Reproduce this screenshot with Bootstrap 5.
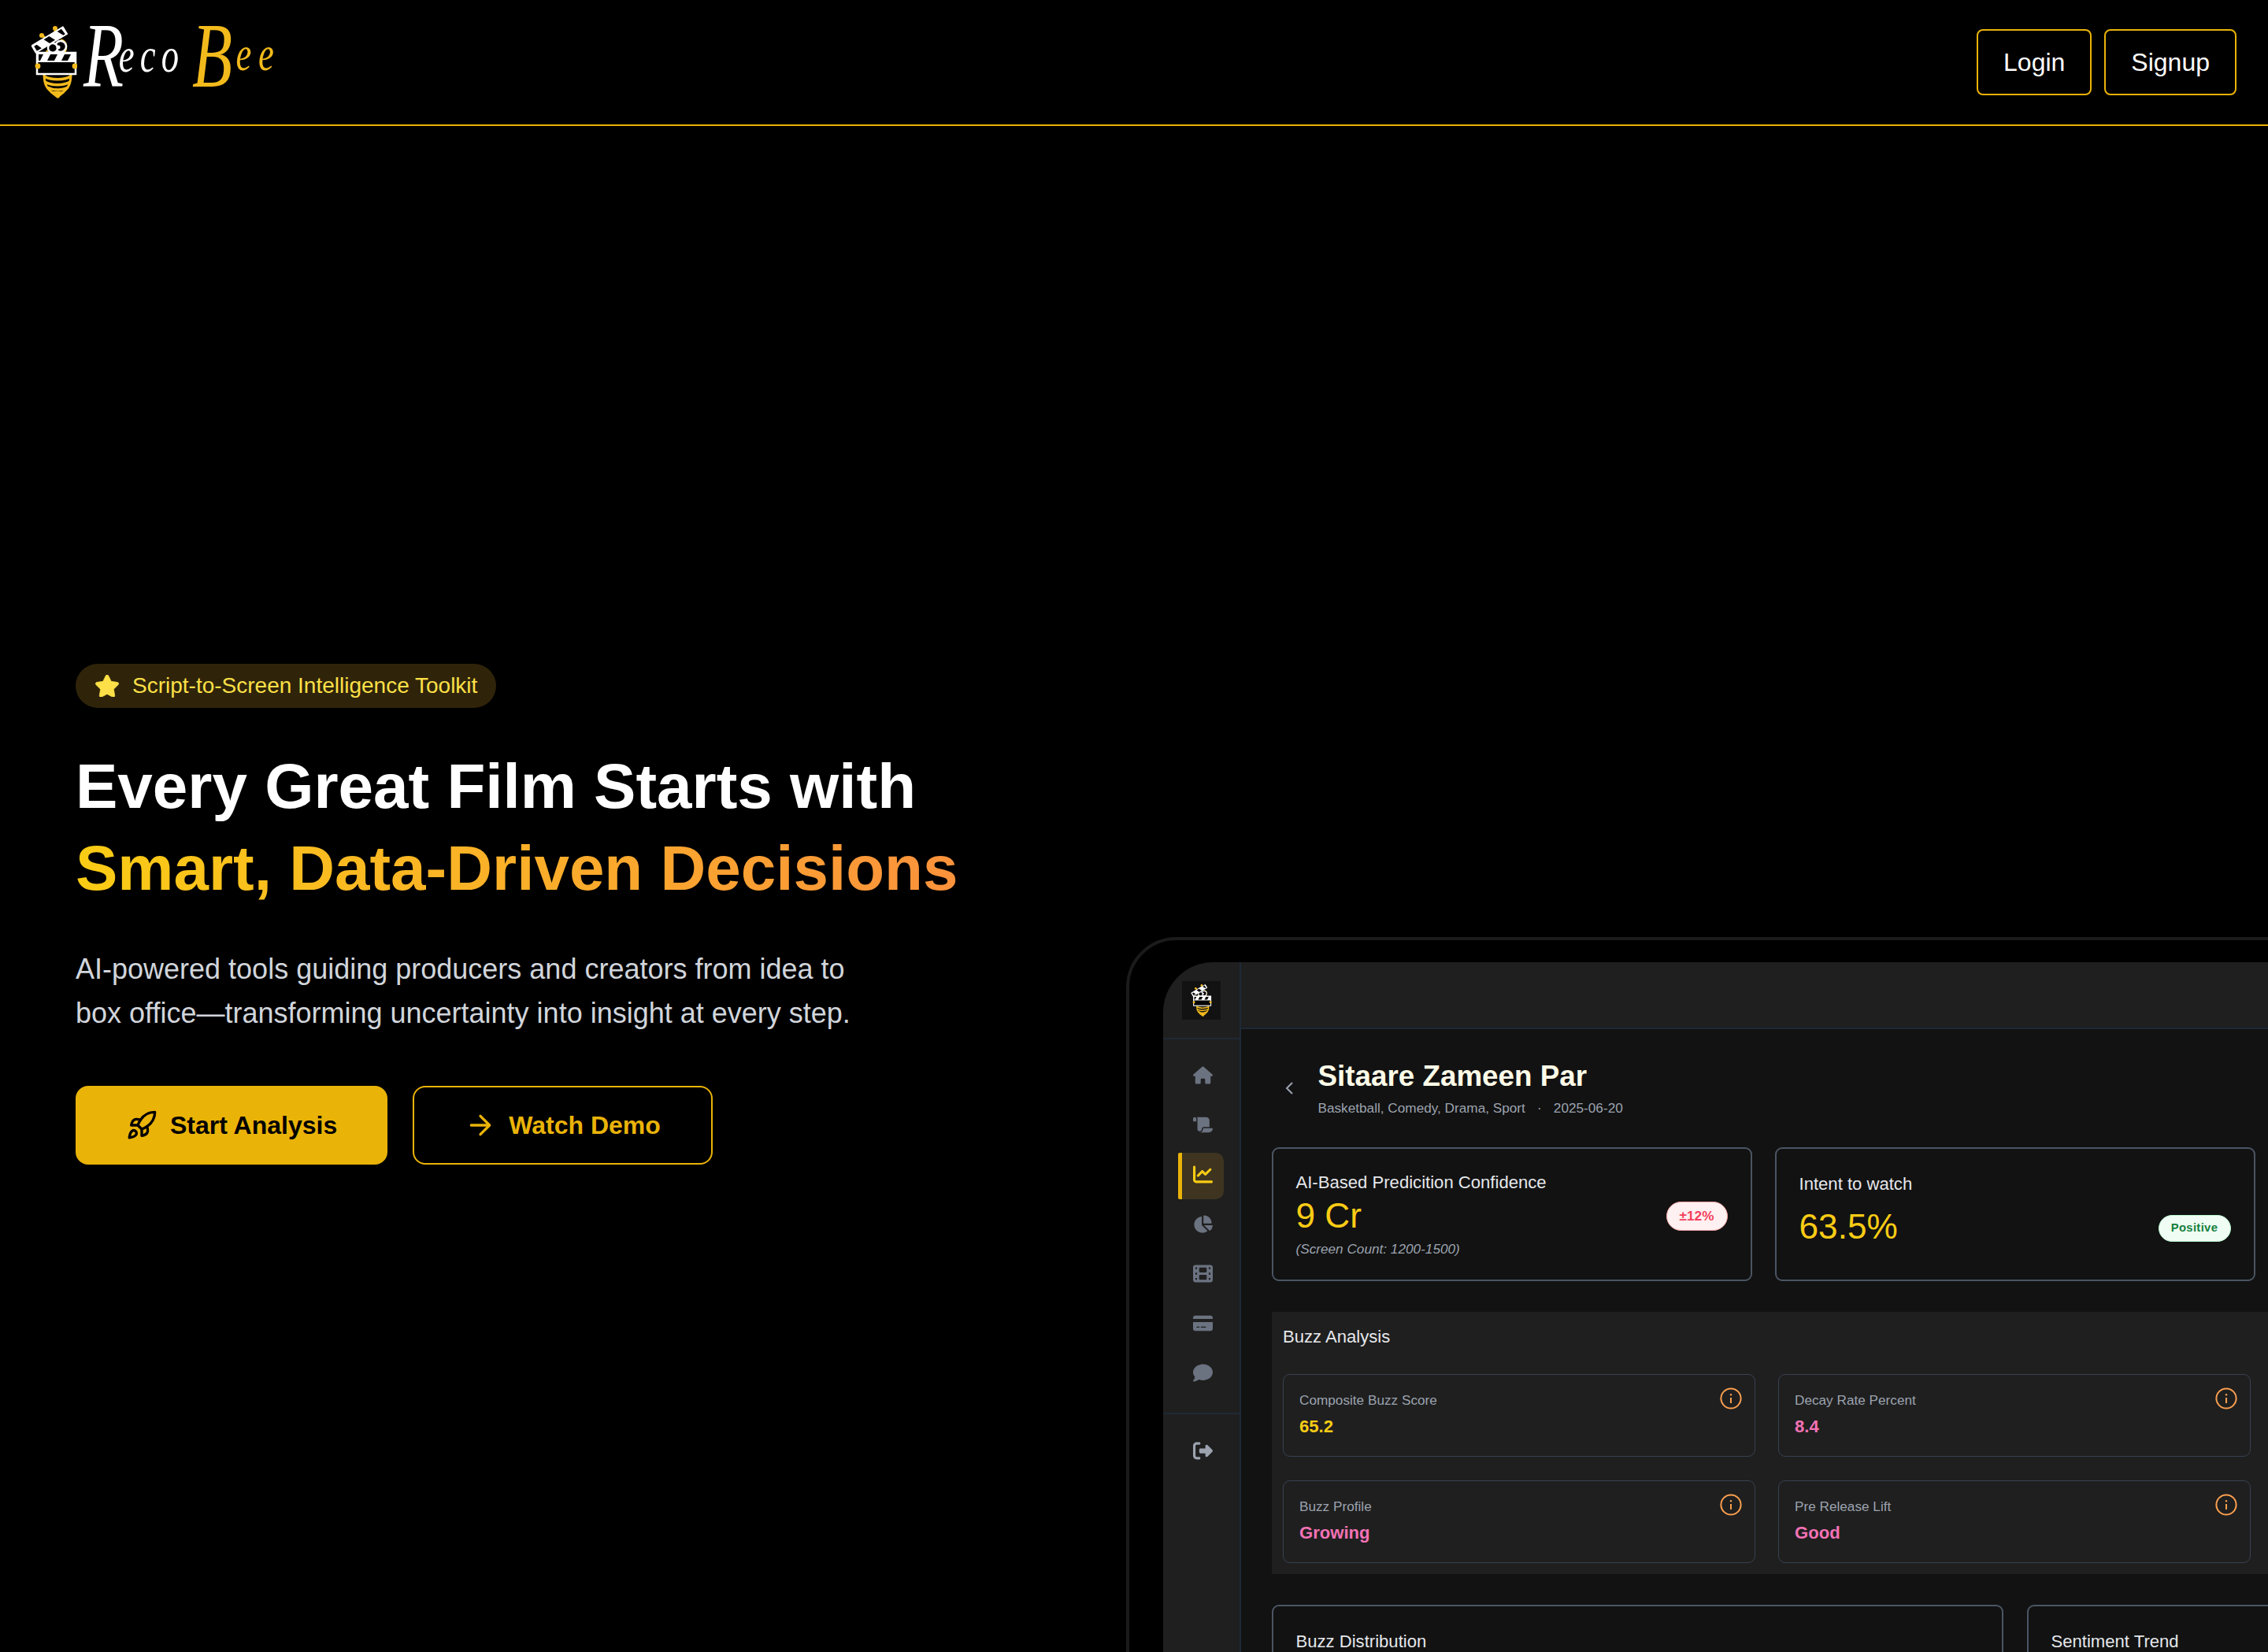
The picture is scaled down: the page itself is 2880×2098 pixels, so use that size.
<!DOCTYPE html>
<html lang="en">
<head>
<meta charset="utf-8">
<meta name="viewport" content="width=device-width, initial-scale=1">
<title>RecoBee</title>
<link href="https://cdn.jsdelivr.net/npm/bootstrap@5.3.0/dist/css/bootstrap.min.css" rel="stylesheet">
<style>
  body { background:#000; color:#fff; font-family:"Liberation Sans", Arial, sans-serif; height:2098px; overflow:hidden; }
  svg { display:block; flex:none; }
  .topbar { height:160px; padding:0 40px; border-bottom:2px solid #eab308; }
  .topbar .btn { font-size:32px; line-height:48px; padding:16px 32px; border:2px solid #eab308; border-radius:8px; color:#fff; }
  .hero { height:1938px; overflow:hidden; }
  .pitch { width:1430px; padding:683px 0 0 96px; flex:none; }
  .tagline { height:56px; padding:8px 24px; gap:16px; border-radius:28px; background:#2f240a; color:#fde047; font-size:28px; line-height:40px; }
  .headline { font-size:80px; line-height:104px; font-weight:700; margin:48px 0 0; white-space:nowrap; }
  .headline .grad { background:linear-gradient(90deg,#facc15,#fb923c); -webkit-background-clip:text; background-clip:text; color:transparent; }
  .intro { font-size:36px; line-height:56px; margin:48px 0 0; color:#d1d5db; white-space:nowrap; }
  .cta { margin-top:64px; gap:32px; }
  .cta .btn { height:100px; padding:0 62px; gap:16px; border:2px solid #eab308; border-radius:16px; font-size:32px; font-weight:700; }
  .cta .solid { background:#eab308; color:#000; }
  .cta .ghost { color:#eab308; padding:0 64px; }
  .device { flex:none; width:1700px; height:1200px; margin-top:1030px; border:4px solid #1b1b1b; border-radius:64px; padding:27.7px 43px; background:#000; }
  .screen { height:1150px; border-radius:64px 0 0 0; overflow:hidden; background:#121212; }
  .side { width:99px; flex:none; background:#1f1f1f; border-right:2px solid #1f2937; }
  .side-logo { height:98px; border-bottom:2px solid #1f2937; padding:24px 0 0 24px; }
  .side-logo div { width:49px; height:49px; background:#121212; }
  .side-nav { padding:19px 0 0 19px; gap:4.4px; }
  .side-item { width:58px; height:58.5px; padding-bottom:4px; border-left:5.5px solid transparent; border-radius:2px 10px 10px 2px; color:#6b7280; }
  .side-item svg { width:25px; height:25px; }
  .side-item.on { background:#3e3420; border-left-color:#eab308; color:#facc15; }
  .side-exit { margin-top:19px; border-top:2px solid #1f2937; padding:20px 0 0 19px; }
  .side-exit .side-item { color:#9ca3af; }
  .mainpane { width:1500px; flex:none; }
  .mainbar { height:85px; background:#1f1f1f; border-bottom:2px solid #1f2937; }
  .board { padding:38px 0 0 38.5px; }
  .film-title { font-size:36.8px; line-height:44px; font-weight:700; color:#fefce8; margin:0; }
  .film-meta { font-size:17.2px; line-height:24px; margin-top:6px; color:#9ca3af; }
  .tile { border:2px solid #4b5563; border-radius:9px; flex:none; }
  .stats { margin-top:38.3px; gap:29px; }
  .stats .tile { width:610px; height:170px; padding:28px 29px 0; }
  .t-head { font-size:22.1px; line-height:30px; color:#e5e7eb; }
  .t-num { font-size:44.2px; line-height:48px; color:#facc15; margin-top:3px; }
  .t-note { font-size:17.2px; line-height:24px; color:#9ca3af; margin-top:6px; font-style:italic; }
  .intent .t-head { padding-top:2.5px; }
  .intent .t-num { margin-top:15px; }
  .chip { border-radius:20px; font-weight:700; text-align:center; }
  .chip-red { width:78px; height:37px; line-height:35px; margin-top:39px; font-size:17.2px; background:#fff0f1; color:#f43f5e; border:1px solid #fca5a5; }
  .chip-green { width:92px; height:34px; line-height:31px; margin-top:56px; font-size:14.8px; letter-spacing:.35px; background:#f0fdf4; color:#15803d; border:1px solid #bbf7d0; }
  .buzz { margin-top:38.8px; height:333.7px; padding:17px 0 0 14.5px; background:#1f1f1f; }
  .buzz-grid { margin-top:32px; display:grid; grid-template-columns:600px 600px; grid-auto-rows:105px; gap:30px 29px; }
  .metric { border:1px solid #374151; border-radius:9px; padding:20px 16px 0 20px; }
  .m-label { font-size:17.2px; line-height:24px; color:#9ca3af; }
  .m-val { font-size:22.1px; line-height:30px; font-weight:700; margin-top:7px; color:#f472b6; }
  .m-val.gold { color:#facc15; }
  .metric svg { margin-top:-4px; }
  .charts { margin-top:39px; gap:30px; }
  .charts .tile { height:400px; padding:30px 29px; }
</style>
</head>
<body>
<svg width="0" height="0" class="position-absolute">
  <defs>
    <symbol id="bee" viewBox="0 0 58 94">
      <g fill="none" stroke="#f3ba1c" stroke-width="3">
        <path d="M13 13l6 6M30 6v10"/><path d="M37 20c7 1 9 9 4 17M20 33v4"/>
        <path d="M16 63c0 14 3 19 17 29c13-10 17-14 17-29"/>
        <path d="M16 66c8 5 26 5 34 0M17 73c8 5 24 5 32 0M20 80c8 4 19 4 26 0M25 86c5 2 11 2 16 0" stroke-width="3.5"/>
      </g>
      <g fill="#f3ba1c"><circle cx="13" cy="14" r="3"/><circle cx="30" cy="5" r="3"/><path d="M27 85h10l-2 9z"/></g>
      <circle cx="37" cy="28" r="7" fill="#000" stroke="#fff" stroke-width="2.5"/><circle cx="27" cy="30" r="6" fill="#000" stroke="#fff" stroke-width="2.5"/>
      <circle cx="34" cy="29" r="2.5" fill="#fff"/>
      <g transform="rotate(-31 7 36)"><rect x="5" y="24" width="48" height="12" rx="1" fill="#fff"/><path d="M8 27h4l3 7H8zM23 26h8l4 8h-8zM43 26h6l1 8h-3z" fill="#000"/></g>
      <rect x="7" y="36" width="49" height="27" fill="#000" stroke="#fff" stroke-width="2.5"/>
      <path d="M7 36h49v12H7z" fill="#fff"/>
      <path d="M9 38h6l-4 8H9zM24 38h9l-4 8h-9zM42 38h8l-4 8h-8z" fill="#000"/>
      <circle cx="8" cy="53" r="3.4" fill="#f3ba1c"/><circle cx="55" cy="53" r="3.4" fill="#f3ba1c"/>
    </symbol>
    <symbol id="info" viewBox="0 0 28 28">
      <circle cx="14" cy="14" r="12.6" fill="none" stroke="#fb9f4f" stroke-width="2"/>
      <path d="M14 13v7" stroke="#fb9f4f" stroke-width="2"/><circle cx="14" cy="9.3" r="1.2" fill="#fb9f4f"/>
    </symbol>
  </defs>
</svg>

<nav class="topbar d-flex align-items-center justify-content-between">
  <a href="#" class="d-block" aria-label="RecoBee">
    <svg width="340" height="158" viewBox="0 0 340 158" font-family="'Liberation Serif', serif" font-style="italic">
      <use href="#bee" x="0" y="31" width="58" height="94"/>
      <text fill="#fff" transform="translate(66 110) scale(.72 1)"><tspan font-size="116" x="0" y="0">R</tspan><tspan font-size="62" x="62" y="-19" letter-spacing="10">eco</tspan></text>
      <text fill="#f3ba1c" transform="translate(204 110) scale(.72 1)"><tspan font-size="116" x="0" y="0">B</tspan><tspan font-size="62" x="77" y="-21" letter-spacing="12">ee</tspan></text>
    </svg>
  </a>
  <div class="d-flex gap-3">
    <a href="#" class="btn">Login</a>
    <a href="#" class="btn">Signup</a>
  </div>
</nav>

<main class="hero d-flex align-items-start">
  <section class="pitch">
    <div class="tagline d-inline-flex align-items-center text-nowrap align-top">
      <svg width="32" height="28.4" viewBox="0 0 576 512" fill="currentColor" stroke="currentColor" stroke-width="14" stroke-linejoin="round"><path d="M316.900 18C311.600 7 300.400 0 288.100 0s-23.400 7-28.800 18L195 150.300 51.400 171.500c-12 1.800-22 10.200-25.700 21.700s-.7 24.200 7.900 32.700L137.800 329 113.200 474.700c-2 12 3 24.200 12.900 31.300s23 8 33.800 2.300l128.300-68.500 128.300 68.500c10.800 5.700 23.900 4.900 33.800-2.300s14.900-19.300 12.900-31.300L438.500 329 542.700 225.900c8.600-8.500 11.700-21.200 7.900-32.700s-13.700-19.900-25.700-21.700L381.200 150.300 316.900 18z"/></svg>
      <span>Script-to-Screen Intelligence Toolkit</span>
    </div>
    <h1 class="headline">Every Great Film Starts with<br><span class="grad">Smart, Data-Driven Decisions</span></h1>
    <p class="intro">AI-powered tools guiding producers and creators from idea to<br>box office—transforming uncertainty into insight at every step.</p>
    <div class="cta d-flex">
      <a href="#" class="btn solid d-flex align-items-center">
        <svg width="40" height="40" viewBox="0 0 24 24" fill="none" stroke="currentColor" stroke-width="2" stroke-linecap="round" stroke-linejoin="round"><path d="M4.500 16.500c-1.500 1.260-2 5-2 5s3.740-.5 5-2c.71-.84.7-2.130-.09-2.910a2.180 2.180 0 0 0-2.910-.09z"/><path d="m12 15-3-3a22 22 0 0 1 2-3.950A12.880 12.880 0 0 1 22 2c0 2.720-.78 7.500-6 11a22.350 22.350 0 0 1-4 2z"/><path d="M9 12H4s.55-3.030 2-4c1.620-1.080 5 0 5 0"/><path d="M12 15v5s3.030-.55 4-2c1.080-1.620 0-5 0-5"/></svg>
        <span>Start Analysis</span>
      </a>
      <a href="#" class="btn ghost d-flex align-items-center">
        <svg width="40" height="40" viewBox="0 0 24 24" fill="none" stroke="currentColor" stroke-width="2" stroke-linecap="round" stroke-linejoin="round"><path d="M5 12h14M12 5l7 7-7 7"/></svg>
        <span>Watch Demo</span>
      </a>
    </div>
  </section>

  <section class="device">
    <div class="screen d-flex">
      <aside class="side">
        <div class="side-logo"><div class="d-flex align-items-center justify-content-center"><svg width="27" height="42"><use href="#bee" width="27" height="42"/></svg></div></div>
        <div class="side-nav d-flex flex-column">
          <div class="side-item d-flex align-items-center justify-content-center"><svg viewBox="0 0 576 512" fill="currentColor"><path d="M575.800 255.500c0 18-15 32.100-32 32.100h-32l.7 160.200c0 2.700-.2 5.400-.5 8.100V472c0 22.100-17.900 40-40 40H392c-22.100 0-40-17.900-40-40V384c0-17.700-14.300-32-32-32H256c-17.700 0-32 14.300-32 32v88c0 22.100-17.900 40-40 40H104c-22.100 0-40-17.900-40-40V287.600H32c-18 0-32-14-32-32.100c0-9 3-17 10-24L266.400 8c7-7 15-8 22-8s15 2 21 7L564.800 231.500c8 7 12 15 11 24z"/></svg></div>
          <div class="side-item d-flex align-items-center justify-content-center"><svg viewBox="0 0 576 512" fill="currentColor"><path d="M0 80v48c0 17.700 14.300 32 32 32H96V80c0-26.500-21.500-48-48-48S0 53.500 0 80zM112 32c10 13.400 16 30 16 48V384c0 35.300 28.700 64 64 64s64-28.700 64-64v-5.300c0-32.400 26.300-58.700 58.700-58.700H480V128c0-53-43-96-96-96H112zM464 480c61.900 0 112-50.100 112-112c0-8.800-7.200-16-16-16H314.700c-14.700 0-26.700 11.900-26.700 26.700V384c0 53-43 96-96 96H464z"/></svg></div>
          <div class="side-item on d-flex align-items-center justify-content-center"><svg viewBox="0 0 512 512" fill="currentColor"><path d="M64 64c0-17.700-14.300-32-32-32S0 46.300 0 64V400c0 44.200 35.800 80 80 80H480c17.700 0 32-14.300 32-32s-14.300-32-32-32H80c-8.800 0-16-7.200-16-16V64zm406.600 86.600c12.500-12.500 12.500-32.800 0-45.300s-32.800-12.500-45.300 0L320 210.700l-57.400-57.400c-12.500-12.500-32.800-12.500-45.300 0l-112 112c-12.500 12.500-12.500 32.800 0 45.300s32.800 12.500 45.300 0L240 221.300l57.400 57.400c12.500 12.500 32.800 12.500 45.300 0l128-128z"/></svg></div>
          <div class="side-item d-flex align-items-center justify-content-center"><svg viewBox="0 0 576 512" fill="currentColor"><path d="M304 240V16.600c0-9 7-16.600 16-16.600C443.700 0 544 100.300 544 224c0 9-7.600 16-16.600 16H304zM32 272C32 150.700 122.100 50.300 239 34.300c9.200-1.300 17 6.100 17 15.400V288L412.500 444.500c6.700 6.700 6.200 17.700-1.500 23.100C371.800 495.600 323.800 512 272 512C139.500 512 32 404.600 32 272zm526.400 16c9.300 0 16.600 7.800 15.400 17c-7.700 55.900-34.600 105.600-73.900 142.300c-6 5.600-15.400 5.200-21.200-.7L320 288H558.400z"/></svg></div>
          <div class="side-item d-flex align-items-center justify-content-center"><svg viewBox="0 0 512 512" fill="currentColor" fill-rule="evenodd"><path d="M64 32H448a64 64 0 0 1 64 64V416a64 64 0 0 1-64 64H64a64 64 0 0 1-64-64V96a64 64 0 0 1 64-64zM60 92h44v48H60zM60 232h44v48H60zM60 368h44v48H60zM408 92h44v48h-44zM408 232h44v48h-44zM408 368h44v48h-44zM180 96H332a22 22 0 0 1 22 22V202a22 22 0 0 1-22 22H180a22 22 0 0 1-22-22V118a22 22 0 0 1 22-22zM180 288H332a22 22 0 0 1 22 22V394a22 22 0 0 1-22 22H180a22 22 0 0 1-22-22V310a22 22 0 0 1 22-22z"/></svg></div>
          <div class="side-item d-flex align-items-center justify-content-center"><svg viewBox="0 0 576 512" fill="currentColor" fill-rule="evenodd"><path d="M64 32C28.700 32 0 60.700 0 96v32H576V96c0-35.300-28.700-64-64-64H64zM576 224H0V416c0 35.300 28.700 64 64 64H512c35.300 0 64-28.700 64-64V224zM112 352h64c8.800 0 16 7.200 16 16s-7.200 16-16 16H112c-8.800 0-16-7.200-16-16s7.200-16 16-16zm112 16c0-8.800 7.200-16 16-16H368c8.800 0 16 7.200 16 16s-7.200 16-16 16H240c-8.800 0-16-7.200-16-16z"/></svg></div>
          <div class="side-item d-flex align-items-center justify-content-center"><svg viewBox="0 0 512 512" fill="currentColor"><path d="M512 240c0 114.900-114.600 208-256 208c-37.100 0-72.300-6.400-104.100-17.900c-11.900 8.700-31.300 20.600-54.300 30.600C73.600 471.100 44.700 480 16 480c-6.500 0-12.300-3.900-14.800-9.900c-2.500-6-1.100-12.800 3.400-17.400c8-8 14-16 21.700-29c10-16.600 19.500-38.400 21.400-62.900C17.700 326.800 0 285.100 0 240C0 125.100 114.600 32 256 32s256 93.100 256 208z"/></svg></div>
        </div>
        <div class="side-exit"><div class="side-item d-flex align-items-center justify-content-center"><svg viewBox="0 0 512 512" fill="currentColor"><path d="M377.900 105.900L500.700 228.700c7.200 7.200 11.300 17.100 11.300 27.300s-4.100 20.100-11.300 27.300L377.900 406.100c-6.400 6.400-15 9.900-24 9.900c-18.700 0-33.900-15.200-33.900-33.900V320H192c-17.700 0-32-14.300-32-32V224c0-17.700 14.300-32 32-32H320V129.900c0-18.700 15.200-33.900 33.900-33.900c9 0 17.600 3.600 24 9.900zM160 96H96c-17.700 0-32 14.300-32 32V384c0 17.700 14.300 32 32 32h64c17.700 0 32 14.300 32 32s-14.300 32-32 32H96c-53 0-96-43-96-96V128C0 75 43 32 96 32h64c17.700 0 32 14.300 32 32s-14.300 32-32 32z"/></svg></div></div>
      </aside>

      <div class="mainpane">
        <div class="mainbar"></div>
        <div class="board">
          <div class="d-flex align-items-center">
            <svg width="59" height="24" viewBox="0 0 59 24" fill="none" stroke="#9ca3af" stroke-width="2"><path d="M26 5l-7 7 7 7"/></svg>
            <div>
              <h2 class="film-title">Sitaare Zameen Par</h2>
              <div class="film-meta d-flex"><span>Basketball, Comedy, Drama, Sport</span><span style="width:36px" class="text-center">·</span><span>2025-06-20</span></div>
            </div>
          </div>

          <div class="stats d-flex">
            <div class="tile d-flex justify-content-between align-items-start">
              <div><div class="t-head">AI-Based Predicition Confidence</div><div class="t-num">9 Cr</div><div class="t-note">(Screen Count: 1200-1500)</div></div>
              <div class="chip chip-red">±12%</div>
            </div>
            <div class="tile intent d-flex justify-content-between align-items-start">
              <div><div class="t-head">Intent to watch</div><div class="t-num">63.5%</div></div>
              <div class="chip chip-green">Positive</div>
            </div>
          </div>

          <div class="buzz">
            <div class="t-head">Buzz Analysis</div>
            <div class="buzz-grid">
              <div class="metric d-flex justify-content-between"><div><div class="m-label">Composite Buzz Score</div><div class="m-val gold">65.2</div></div><svg width="28" height="28"><use href="#info"/></svg></div>
              <div class="metric d-flex justify-content-between"><div><div class="m-label">Decay Rate Percent</div><div class="m-val">8.4</div></div><svg width="28" height="28"><use href="#info"/></svg></div>
              <div class="metric d-flex justify-content-between"><div><div class="m-label">Buzz Profile</div><div class="m-val">Growing</div></div><svg width="28" height="28"><use href="#info"/></svg></div>
              <div class="metric d-flex justify-content-between"><div><div class="m-label">Pre Release Lift</div><div class="m-val">Good</div></div><svg width="28" height="28"><use href="#info"/></svg></div>
            </div>
          </div>

          <div class="charts d-flex">
            <div class="tile" style="width:929px"><div class="t-head">Buzz Distribution</div></div>
            <div class="tile" style="width:450px"><div class="t-head">Sentiment Trend</div></div>
          </div>
        </div>
      </div>
    </div>
  </section>
</main>
<script src="https://cdn.jsdelivr.net/npm/bootstrap@5.3.0/dist/js/bootstrap.bundle.min.js"></script>
</body>
</html>
